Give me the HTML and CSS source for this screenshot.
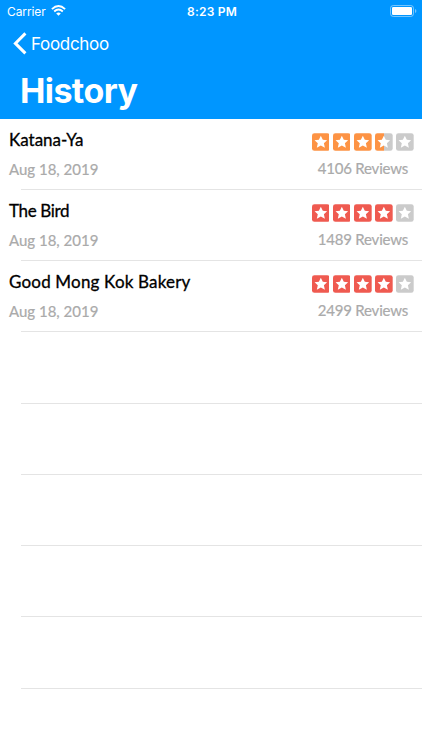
FILE: index.html
```html
<!DOCTYPE html>
<html lang="en">
<head>
    <meta charset="UTF-8">
    <meta name="viewport" content="width=device-width, initial-scale=1.0">
    <title>History</title>
    <link rel="stylesheet" href="styles.css">
</head>
<body>
    <!-- Shared star tile -->
    <svg class="defs" width="0" height="0">
        <defs>
            <linearGradient id="half">
                <stop offset="50%" stop-color="#fd9344"/>
                <stop offset="50%" stop-color="#cbcbcb"/>
            </linearGradient>
            <path id="star" d="M9 2.6 L11 6.8 L15.4 7.2 L12.1 10.2 L13.1 14.9 L9 12.5 L4.9 14.9 L5.9 10.2 L2.6 7.2 L7 6.8 Z" fill="#fff"/>
        </defs>
    </svg>

    <header class="header">
        <div class="status-bar">
            <div class="carrier">
                <span>Carrier</span>
                <svg class="wifi" width="15" height="11" viewBox="0 0 15 11" fill="none" stroke="#fff" stroke-width="1.9">
                    <path d="M0.9 4.1 Q7.5 -1.9 14.1 4.1"/>
                    <path d="M3.2 6.5 Q7.5 2.7 11.8 6.5"/>
                    <path d="M7.5 10.7 L5.2 8.4 Q7.5 6.5 9.8 8.4 Z" fill="#fff" stroke="none"/>
                </svg>
            </div>
            <div class="time">8:23 PM</div>
            <div class="battery">
                <svg width="27" height="12" viewBox="0 0 27 12">
                    <rect x="0.5" y="0.5" width="23" height="11" rx="2.8" fill="none" stroke="#fff" stroke-opacity="0.45"/>
                    <rect x="2" y="2" width="20" height="8" rx="1.3" fill="#fff"/>
                    <path d="M25 4 Q26.4 4.6 26.4 6 Q26.4 7.4 25 8 Z" fill="#fff" fill-opacity="0.45"/>
                </svg>
            </div>
        </div>
        <a class="back" href="#">
            <svg width="14" height="23" viewBox="0 0 14 23" fill="none" stroke="#fff" stroke-width="3">
                <path d="M12.4 1.4 L2.4 11.4 L12.4 21.4"/>
            </svg>
            <span>Foodchoo</span>
        </a>
        <h1 class="title">History</h1>
    </header>

    <ul class="list">
        <li class="row">
            <div class="info">
                <div class="name">Katana-Ya</div>
                <div class="date">Aug 18, 2019</div>
            </div>
            <div class="rating orange">
                <div class="stars">
                    <svg viewBox="0 0 18 18"><rect width="18" height="18" rx="2.5"/><use href="#star"/></svg>
                    <svg viewBox="0 0 18 18"><rect width="18" height="18" rx="2.5"/><use href="#star"/></svg>
                    <svg viewBox="0 0 18 18"><rect width="18" height="18" rx="2.5"/><use href="#star"/></svg>
                    <svg class="partial" viewBox="0 0 18 18"><rect width="18" height="18" rx="2.5"/><use href="#star"/></svg>
                    <svg class="empty" viewBox="0 0 18 18"><rect width="18" height="18" rx="2.5"/><use href="#star"/></svg>
                </div>
                <div class="reviews">4106 Reviews</div>
            </div>
        </li>
        <li class="row">
            <div class="info">
                <div class="name narrow">The Bird</div>
                <div class="date">Aug 18, 2019</div>
            </div>
            <div class="rating red">
                <div class="stars">
                    <svg viewBox="0 0 18 18"><rect width="18" height="18" rx="2.5"/><use href="#star"/></svg>
                    <svg viewBox="0 0 18 18"><rect width="18" height="18" rx="2.5"/><use href="#star"/></svg>
                    <svg viewBox="0 0 18 18"><rect width="18" height="18" rx="2.5"/><use href="#star"/></svg>
                    <svg viewBox="0 0 18 18"><rect width="18" height="18" rx="2.5"/><use href="#star"/></svg>
                    <svg class="empty" viewBox="0 0 18 18"><rect width="18" height="18" rx="2.5"/><use href="#star"/></svg>
                </div>
                <div class="reviews">1489 Reviews</div>
            </div>
        </li>
        <li class="row">
            <div class="info">
                <div class="name wide">Good Mong Kok Bakery</div>
                <div class="date">Aug 18, 2019</div>
            </div>
            <div class="rating red">
                <div class="stars">
                    <svg viewBox="0 0 18 18"><rect width="18" height="18" rx="2.5"/><use href="#star"/></svg>
                    <svg viewBox="0 0 18 18"><rect width="18" height="18" rx="2.5"/><use href="#star"/></svg>
                    <svg viewBox="0 0 18 18"><rect width="18" height="18" rx="2.5"/><use href="#star"/></svg>
                    <svg viewBox="0 0 18 18"><rect width="18" height="18" rx="2.5"/><use href="#star"/></svg>
                    <svg class="empty" viewBox="0 0 18 18"><rect width="18" height="18" rx="2.5"/><use href="#star"/></svg>
                </div>
                <div class="reviews">2499 Reviews</div>
            </div>
        </li>
        <!-- Empty rows -->
        <li class="row"></li>
        <li class="row"></li>
        <li class="row"></li>
        <li class="row"></li>
        <li class="row"></li>
    </ul>
</body>
</html>
```

FILE: styles.css
```css
/* Global Styles */
* {
    box-sizing: border-box;
}

body {
    margin: 0;
    height: 750px;
    overflow: hidden;
    background-color: #fff;
    font-family: Futura, Lato, sans-serif;
}

.defs {
    display: block;
}

/* Header */
.header {
    height: 118.7px;
    background-color: #0096ff;
    color: #fff;
    font-family: Inter, sans-serif;
}

.status-bar {
    display: grid;
    grid-template-columns: 1fr auto 1fr;
    align-items: center;
    height: 22px;
    padding: 0 5px 0 7px;
    font-size: 12px;
}

.carrier {
    display: flex;
    align-items: center;
    gap: 5px;
    letter-spacing: -0.1px;
}

.wifi {
    margin-top: -2px;
}

.time {
    font-weight: 600;
    letter-spacing: 0.2px;
}

.battery {
    display: flex;
    justify-content: flex-end;
    margin-top: -1px;
}

.back {
    display: flex;
    align-items: center;
    gap: 4px;
    height: 43px;
    padding-left: 13px;
    color: #fff;
    font-size: 17px;
    letter-spacing: -0.3px;
    text-decoration: none;
}

.title {
    margin: 0;
    padding-left: 20px;
    font-size: 34px;
    font-weight: 700;
    line-height: 52px;
    letter-spacing: -0.6px;
}

/* History list */
.list {
    margin: 0;
    padding: 0;
    list-style: none;
}

.row {
    display: flex;
    justify-content: space-between;
    height: 71.25px;
    padding: 10px 8px 0 9px;
    background: linear-gradient(#e4e4e4, #e4e4e4) 21px 100% / 100% 1px no-repeat;
}

.name {
    color: #000;
    font-size: 17px;
    line-height: 21px;
    -webkit-text-stroke: 0.3px #000;
}

.narrow {
    letter-spacing: -0.35px;
}

.wide {
    letter-spacing: 0.18px;
}

.date,
.reviews {
    color: #aaa;
    font-size: 15px;
    line-height: 20px;
    -webkit-text-stroke: 0.2px #aaa;
}

.date {
    margin-top: 9px;
}

.rating {
    display: flex;
    flex-direction: column;
    align-items: flex-end;
    padding-top: 4px;
}

.stars {
    display: flex;
    gap: 3.5px;
}

.stars svg {
    width: 17.7px;
    height: 18px;
}

.orange rect {
    fill: #fd9344;
}

.red rect {
    fill: #ef5a50;
}

.stars .partial rect {
    fill: url(#half);
}

.stars .empty rect {
    fill: #cbcbcb;
}

.reviews {
    margin-top: 7px;
    padding-right: 6px;
    letter-spacing: -0.2px;
}
```
